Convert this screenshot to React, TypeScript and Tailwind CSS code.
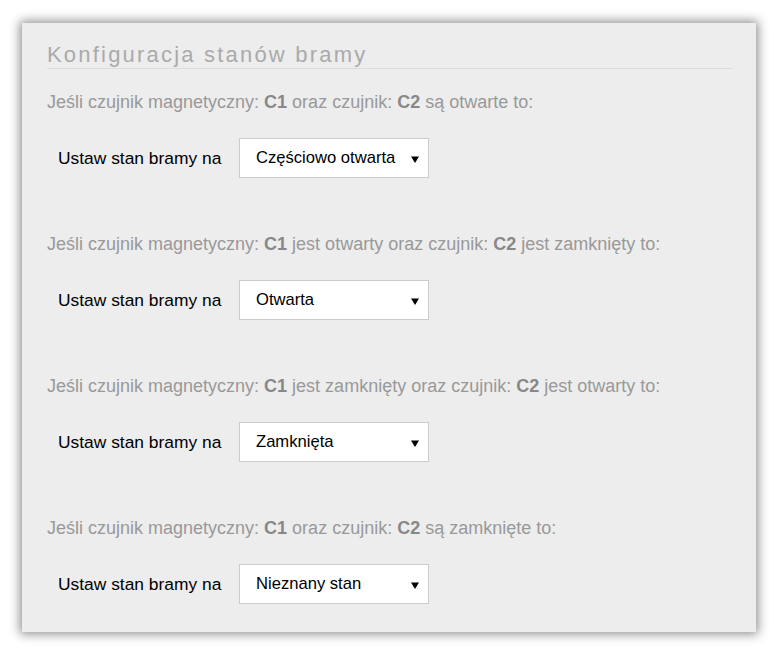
const rules = [
  {
    id: 'both-open',
    parts: ['Jeśli czujnik magnetyczny: ', 'C1', ' oraz czujnik: ', 'C2', ' są otwarte to:'],
    value: 'Częściowo otwarta',
  },
  {
    id: 'c1-open',
    parts: ['Jeśli czujnik magnetyczny: ', 'C1', ' jest otwarty oraz czujnik: ', 'C2', ' jest zamknięty to:'],
    value: 'Otwarta',
  },
  {
    id: 'c2-open',
    parts: ['Jeśli czujnik magnetyczny: ', 'C1', ' jest zamknięty oraz czujnik: ', 'C2', ' jest otwarty to:'],
    value: 'Zamknięta',
  },
  {
    id: 'both-closed',
    parts: ['Jeśli czujnik magnetyczny: ', 'C1', ' oraz czujnik: ', 'C2', ' są zamknięte to:'],
    value: 'Nieznany stan',
  },
];

function StateSelect({ value }: { value: string }) {
  return (
    <div className="flex h-[40px] w-[190px] items-center justify-between border border-[#cccccc] bg-white pl-[16px] pr-[9px] pt-[1px] text-[16.6px] text-black">
      <span>{value}</span>
      <svg width="8" height="8" viewBox="0 0 8 8">
        <path d="M0 1.5 L8 1.5 L4 8 Z" fill="#000" />
      </svg>
    </div>
  );
}

export default function App() {
  return (
    <div className="min-h-[662px] w-[781px] bg-white pl-[22px] pt-[23px] font-['Liberation_Sans',Arial,sans-serif]">
      <div className="w-[734px] bg-[#ededed] px-[25px] pb-[28px] pt-[19px] shadow-[0_0_10px_2px_rgba(0,0,0,0.45)]">
        <h2 className="mr-[-2px] border-b border-[#dddddd] text-[22px] font-normal leading-[26px] tracking-[2.2px] text-[#aaaaaa]">
          Konfiguracja stanów bramy
        </h2>

        {rules.map((rule, index) => (
          <div key={rule.id} className={index === 0 ? 'mt-[23px]' : 'mt-[56px]'}>
            <p className="text-[18px] leading-[20px] text-[#999999]">
              {rule.parts.map((part, i) =>
                i % 2 === 1 ? (
                  <b key={i} className="font-bold text-[#888888]">{part}</b>
                ) : (
                  <span key={i}>{part}</span>
                )
              )}
            </p>
            <div className="mt-[26px] flex items-center pl-[11px]">
              <span className="w-[181px] text-[17.4px] text-black">Ustaw stan bramy na</span>
              <StateSelect value={rule.value} />
            </div>
          </div>
        ))}
      </div>
    </div>
  );
}
